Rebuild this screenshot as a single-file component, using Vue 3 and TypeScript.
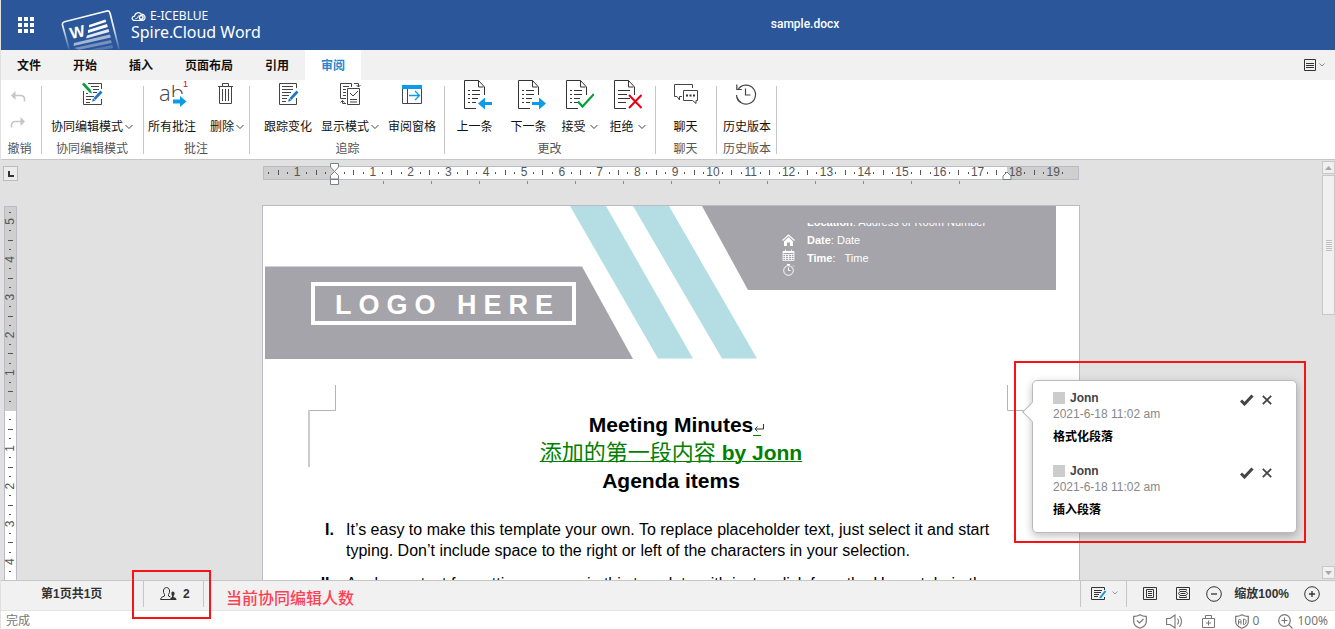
<script setup lang="ts">
interface Tool {
  id: string
  label: string
  menu?: boolean
}
interface Group {
  id: string
  title: string
  tools: Tool[]
}
interface Comment {
  author: string
  date: string
  text: string
}

const tabs: string[] = ['文件', '开始', '插入', '页面布局', '引用', '审阅']
const activeTab = '审阅'

const groups: Group[] = [
  { id: 'coedit', title: '协同编辑模式', tools: [{ id: 'mode', label: '协同编辑模式', menu: true }] },
  {
    id: 'notes',
    title: '批注',
    tools: [
      { id: 'allnotes', label: '所有批注' },
      { id: 'trash', label: '删除', menu: true },
    ],
  },
  {
    id: 'track',
    title: '追踪',
    tools: [
      { id: 'trackchanges', label: '跟踪变化' },
      { id: 'display', label: '显示模式', menu: true },
      { id: 'pane', label: '审阅窗格' },
    ],
  },
  {
    id: 'changes',
    title: '更改',
    tools: [
      { id: 'prev', label: '上一条' },
      { id: 'next', label: '下一条' },
      { id: 'accept', label: '接受', menu: true },
      { id: 'reject', label: '拒绝', menu: true },
    ],
  },
  { id: 'chat', title: '聊天', tools: [{ id: 'chat', label: '聊天' }] },
  { id: 'history', title: '历史版本', tools: [{ id: 'history', label: '历史版本' }] },
]

const comments: Comment[] = [
  { author: 'Jonn', date: '2021-6-18 11:02 am', text: '格式化段落' },
  { author: 'Jonn', date: '2021-6-18 11:02 am', text: '插入段落' },
]

const cm = 37.8
const hZero = 72
const vZero = 204.5

interface Mark {
  pos: number
  kind: 'number' | 'half' | 'dot'
  label: string
}
function marks(zero: number, fromQuarter: number, toQuarter: number): Mark[] {
  const out: Mark[] = []
  for (let q = fromQuarter; q <= toQuarter; q++) {
    if (q === 0) continue
    const pos = zero + (q * cm) / 4
    const rest = Math.abs(q) % 4
    out.push({ pos, kind: rest === 0 ? 'number' : rest === 2 ? 'half' : 'dot', label: String(Math.abs(q) / 4) })
  }
  return out
}
const hMarks = marks(hZero, -7, 77)
const vMarks = marks(vZero, -21, 17)
const tabStops: number[] = Array.from({ length: 13 }, (_, i) => hZero + 48 * (i + 1))
const thumbGrip = [0, 1, 2, 3, 4, 5]
</script>

<template>
  <div class="app">
    <header class="top">
      <button class="launcher" aria-label="应用">
        <svg width="16" height="16" viewBox="0 0 16 16" fill="#fff">
          <template v-for="r in 3" :key="r">
            <rect v-for="c in 3" :key="c" :x="(c - 1) * 6" :y="(r - 1) * 6" width="4" height="4" />
          </template>
        </svg>
      </button>
      <svg class="logo" width="60" height="40" viewBox="0 0 60 40">
        <defs>
          <linearGradient id="fade" x1="0" y1="0" x2="0" y2="1">
            <stop offset="0" stop-color="#fff" />
            <stop offset=".45" stop-color="#dfe6f1" />
            <stop offset="1" stop-color="#3f68a6" />
          </linearGradient>
        </defs>
        <path d="M8 39 L1.5 15 Q1 12.500 3.500 11.800 L46 1 Q48.500 .6 49 3 L58 39" fill="none" stroke="url(#fade)" stroke-width="1.700" />
        <path d="M28 15 L44.500 9.500 L45.200 12 L28 17.500Z M27 20 L46 14 L46.800 17 L27 23Z" fill="#fff" />
        <path d="M26 25.500 L47.500 19 L48.300 22 L25 28.500Z" fill="#e3e9f3" />
        <path d="M13 33 L49 24.500 L49.800 27.500 L12.500 36Z" fill="#a5b7d5" />
        <path d="M13 38 L50 30 L50.800 33 L18 39.800Z" fill="#7892c0" />
        <path d="M28 39.800 L51.500 35 L52 38 L42 39.800Z" fill="#5577ae" />
        <text x="10" y="29" transform="rotate(-12 10 29)" class="logo-w">W</text>
      </svg>
      <div class="brand">
        <div class="vendor">
          <svg width="15" height="11" viewBox="0 0 15 11" fill="none" stroke="#fff">
            <path d="M4 9.500 C.5 9.500 0 6 3.500 5.200 C4 1.500 8.500 .5 10 3.200 C14 2.500 15.500 8 12 9.500Z" stroke-width="1.200" />
            <path d="M4 8 Q7 8 7.500 4.500" stroke-width=".8" />
            <circle cx="10.200" cy="6.400" r="1.800" stroke-width="1.500" />
          </svg>
          <span>E-ICEBLUE</span>
        </div>
        <div class="product">Spire.Cloud Word</div>
      </div>
      <div class="doc-name">sample.docx</div>
    </header>

    <nav class="tabs">
      <button v-for="t in tabs" :key="t" class="tab" :class="{ active: t === activeTab }">{{ t }}</button>
      <button class="view-toggle" aria-label="功能区显示">
        <svg width="22" height="12" viewBox="0 0 22 12" fill="none" stroke="#333">
          <path d="M.5 .5h11v11h-11z M2 4.500h8 M2 6.500h8 M2 8.500h8" />
          <path d="M15.500 4.500l2.500 2.500 2.500-2.500" stroke="#888" />
        </svg>
      </button>
    </nav>

    <div class="ribbon">
      <section class="group undo">
        <div class="undo-tools">
          <button aria-label="撤销">
            <svg width="16" height="12" viewBox="0 0 16 12" fill="none" stroke="#c6c6c6" stroke-width="1.600">
              <path d="M2 4.500h8.500q4 0 4 4v2" />
              <path d="M5.500 0v9L1 4.500z" fill="#c6c6c6" stroke="none" />
            </svg>
          </button>
          <button aria-label="重做">
            <svg width="16" height="12" viewBox="0 0 16 12" fill="none" stroke="#c6c6c6" stroke-width="1.600">
              <path d="M14 4.500H5.500q-4 0-4 4v2" />
              <path d="M10.500 0v9l4.500-4.500z" fill="#c6c6c6" stroke="none" />
            </svg>
          </button>
        </div>
        <h2>撤销</h2>
      </section>

      <section v-for="g in groups" :key="g.id" class="group" :class="g.id">
        <div class="tools">
          <button v-for="t in g.tools" :key="t.id" class="tool">
            <svg v-if="t.id === 'mode'" width="28" height="32" viewBox="0 0 28 32" fill="none" stroke="#444">
              <path d="M10 3.500h13.500V9 M23.500 19v5.500h-18V11 M13 6.500h8 M15 9.500h6 M8 13.500h2 M15 12.500h4 M8 16.500h8 M8 19.500h5 M8 22.500h4" />
              <path d="M5 3.500l7 7.500" stroke="#00a13a" stroke-width="2.600" />
              <path d="M10.500 12l3.500 1.500-1.200-3.500z" fill="#00a13a" stroke="none" />
              <path d="M23.500 11.500l-7 7.500" stroke="#1e76cc" stroke-width="2.600" />
              <path d="M14 21.800l1-3.500 2.500 2.200z" fill="#1e76cc" stroke="none" />
            </svg>
            <svg v-else-if="t.id === 'allnotes'" class="ab-icon" width="30" height="32" viewBox="0 0 30 32">
              <text x="2" y="21" class="ab">ab</text>
              <text x="26" y="7" class="sup">1</text>
              <path d="M15 17h6v-3h9v15h-15z" fill="#fff" />
              <path d="M16 19.500h7v-3.500l6.500 5.500-6.500 5.500v-3.500h-7z" fill="#0b9be8" />
            </svg>
            <svg v-else-if="t.id === 'trash'" width="28" height="32" viewBox="0 0 28 32" fill="none" stroke="#444">
              <path d="M5 6.500h15 M9.500 6v-2.500h6V6 M6.500 7v16.500h12V7 M9.500 9v12 M12.500 9v12 M15.500 9v12" />
            </svg>
            <svg v-else-if="t.id === 'trackchanges'" width="28" height="32" viewBox="0 0 28 32" fill="none" stroke="#444">
              <path d="M22.500 8V3.500h-17v21h17V18 M8 6.500h11 M8 9.500h11 M8 12.500h9 M8 15.500h7 M8 18.500h5 M8 21.500h4" />
              <path d="M23.500 11.500l-7 7.500" stroke="#1e76cc" stroke-width="2.600" />
              <path d="M14 21.800l1-3.500 2.500 2.200z" fill="#1e76cc" stroke="none" />
            </svg>
            <svg v-else-if="t.id === 'display'" width="28" height="32" viewBox="0 0 28 32" fill="none" stroke="#444">
              <path d="M10 18.500H4.500V3.500h11V7 M7 6.500h6 M7 9.500h3 M7 12.500h3 M7 15.500h3 M11.500 8.500h12v16h-12z M14 13l3 3 5-5 M14 19.500h7 M14 22h7" />
              <path d="M18 3.500h4.500V7 M20.500 5l2 2 2-2 M10 23.500H6.500V21 M4.500 22.500l2-2 2 2" />
            </svg>
            <svg v-else-if="t.id === 'pane'" width="28" height="32" viewBox="0 0 28 32" fill="none" stroke="#444">
              <path d="M4.500 7v16.500h19V7 M9.500 9v14" />
              <path d="M4 5h20v4H4z" fill="#0b9be8" stroke="none" />
              <path d="M11 15.500h10 M17 11l4.500 4.500L17 20" stroke="#0b9be8" stroke-width="1.300" />
            </svg>
            <svg
              v-else-if="g.id === 'changes'"
              :width="t.menu ? 28 : 34"
              height="32"
              :viewBox="t.menu ? '0 0 28 32' : '-6 0 34 32'"
              fill="none"
              stroke="#333"
            >
              <path d="M.5 .5h14l6 6.500v8 M12 28.500H.5V.5 M14.500 .5v6.500h5" />
              <path v-if="t.id !== 'reject'" d="M4 10.500h2 M8 10.500h8 M4 14.500h2 M8 14.500h8 M4 18.500h2 M8 18.500h6 M4 22.500h2 M8 22.500h4" />
              <path v-else d="M4 10.500h12 M4 14.500h9 M4 18.500h12 M4 22.500h8" />
              <path v-if="t.id === 'prev'" d="M28 22H21v-4.500L14 23.500l7 6V25h7z" fill="#0b9be8" stroke="none" />
              <path v-if="t.id === 'next'" d="M14 22h7v-4.500l7 6-7 6V25h-7z" fill="#0b9be8" stroke="none" />
              <path v-if="t.id === 'accept'" d="M12 21.500l4.500 5L28 14" stroke="#00a13a" stroke-width="2.200" />
              <path v-if="t.id === 'reject'" d="M15 15l12.500 13 M27.500 15L15 28" stroke="#e60012" stroke-width="2" />
            </svg>
            <svg v-else-if="t.id === 'chat'" width="28" height="32" viewBox="0 0 28 32" fill="none" stroke="#444">
              <path d="M20.500 8V4.500h-18v12h2.500l2.500 3.500v-3.500h2.500" />
              <path d="M11.500 10.500h14v10h-1.500v3l-3.500-3h-9z" />
              <path d="M14 14.500h2v2h-2z M17.500 14.500h2v2h-2z M21 14.500h2v2h-2z" fill="#333" stroke="none" />
            </svg>
            <svg v-else width="28" height="32" viewBox="0 0 28 32" fill="none" stroke="#444" stroke-width="1.200">
              <path d="M5 9.500A9.500 9.500 0 1 1 3.500 15" />
              <path d="M3.800 4.500v5h5 M12.500 8.500v6.500h5" />
              <path d="M4 17.500A9.500 9.500 0 0 0 8 22.500" />
            </svg>
            <span class="caption">
              {{ t.label }}
              <svg v-if="t.menu" width="8" height="6" viewBox="0 0 8 6" fill="none" stroke="#444"><path d="M.5 1L4 4.500 7.500 1" /></svg>
            </span>
          </button>
        </div>
        <h2>{{ g.title }}</h2>
      </section>
    </div>

    <main class="workspace">
      <button class="tab-kind" aria-label="制表符">
        <svg width="6" height="6" viewBox="0 0 6 6"><path d="M0 0h2v4h4v2H0z" fill="#333" /></svg>
      </button>
      <div class="ruler-row">
        <svg class="h-ruler" width="816" height="22" viewBox="0 0 816 22">
          <rect x=".5" y="3.500" width="815" height="13" fill="#cfcfcf" stroke="#b9bcc4" />
          <rect x="72" y="4" width="672" height="12" fill="#fff" />
          <g v-for="m in hMarks" :key="m.pos">
            <text v-if="m.kind === 'number'" :x="m.pos" y="13" class="num">{{ m.label }}</text>
            <rect v-else-if="m.kind === 'half'" :x="Math.floor(m.pos)" y="7" width="1" height="5" fill="#555" />
            <rect v-else :x="Math.floor(m.pos)" y="9" width="1" height="2" fill="#555" />
          </g>
          <rect v-for="s in tabStops" :key="s" :x="s" y="18" width="1" height="3" fill="#8a8d94" />
          <g fill="#fff" stroke="#7b8089">
            <path d="M67.500 .5h8V4l-4 4.500-4-4.500z" />
            <path d="M67.500 16v-3.500l4-4 4 4V16z" />
            <path d="M67.500 16.500h8v5h-8z" />
            <path d="M740 16.500v-3.500l4-4 4 4v3.500z" />
          </g>
        </svg>
      </div>
      <div class="v-col">
        <svg class="v-ruler" width="13" height="374" viewBox="0 0 13 374">
          <rect x=".5" y=".5" width="12" height="376" fill="#fff" stroke="#b9bcc4" />
          <rect x="1" y="1" width="11" height="204" fill="#cfcfcf" />
          <g v-for="m in vMarks" :key="m.pos">
            <text v-if="m.kind === 'number'" :transform="`translate(10 ${m.pos}) rotate(-90)`" class="num">{{ m.label }}</text>
            <rect v-else-if="m.kind === 'half'" x="4" :y="Math.floor(m.pos)" width="5" height="1" fill="#555" />
            <rect v-else x="5" :y="Math.floor(m.pos)" width="2" height="1" fill="#555" />
          </g>
        </svg>
      </div>

      <div class="stage">
        <article class="page">
          <div class="banner">
            <svg width="816" height="153" viewBox="0 0 816 153">
              <path d="M2 60.500H319L370 153H2z" fill="#a5a4aa" />
              <path d="M439 0H793V84H485z" fill="#a5a4aa" />
              <path d="M307 0H343L430 152.500H395z M370 0H406L494 152.500H459z" fill="#b4dee3" />
            </svg>
            <div class="logo-box">LOGO HERE</div>
            <div class="meta">
              <svg width="13" height="42" viewBox="0 0 13 42" fill="none" stroke="#fff">
                <path d="M.5 6.500l6-5.500 6 5.500" stroke-width="1.200" />
                <path d="M2 7.500L6.500 3 11 7.500V12H8V8.500H5V12H2z" fill="#fff" stroke="none" />
                <path d="M1 17.500h11v9H1z M1 20.500h11 M1 22.500h11 M1 24.500h11 M3.500 20v6 M6.500 20v6 M9.500 20v6 M3.500 15.500v3 M9.500 15.500v3" stroke-width=".8" />
                <path d="M1 17h11v2H1z" fill="#fff" stroke="none" />
                <circle cx="6.500" cy="36.500" r="4.800" />
                <path d="M5 30.500h3 M6.500 30.500v1.500 M6.500 33.500v3h2 M11 31.500l1 1" />
              </svg>
              <div class="meta-clip">
                <div class="meta-lines">
                  <div><b>Location</b>: Address or Room Number</div>
                  <div><b>Date</b>: Date</div>
                  <div><b>Time</b>: &nbsp; Time</div>
                </div>
              </div>
            </div>
          </div>
          <svg class="margins" width="816" height="84" viewBox="0 0 816 84" fill="none" stroke="#b4b4b4">
            <path d="M72.500 0V25.500H46 M744.500 0V25.500H765" />
            <path d="M46 25V82" stroke="#ccc" stroke-width="2" />
          </svg>
          <div class="heading">
            <h1>
              <span class="with-mark">Meeting Minutes<svg class="mark" width="12" height="14" viewBox="0 0 12 14" fill="none" stroke="#333"><path d="M10.500 2v5H2 M4.500 4.500L2 7 4.500 9.500" /><path d="M0 13.500h8" stroke="#008000" /></svg></span>
            </h1>
            <p><ins><span class="cjk">添加的第一段内容</span> by Jonn</ins></p>
            <h1>Agenda items</h1>
          </div>
          <ol class="items">
            <li>
              <b>I.</b>
              <span>It’s easy to make this template your own. To replace placeholder text, just select it and start typing. Don’t include space to the right or left of the characters in your selection.</span>
            </li>
            <li>
              <b>II.</b>
              <span>Apply any text formatting you see in this template with just a click from the Home tab, in the Styles group.</span>
            </li>
          </ol>

          <div class="frame comment-frame"></div>
          <aside class="callout">
            <div v-for="c in comments" :key="c.text" class="comment">
              <div class="who">
                <i class="swatch"></i>
                <strong>{{ c.author }}</strong>
                <button aria-label="接受修订">
                  <svg width="14" height="12" viewBox="0 0 14 12"><path d="M1 6.500l3.500 3.500L12.500 1.500" fill="none" stroke="#444" stroke-width="3" /></svg>
                </button>
                <button aria-label="拒绝修订">
                  <svg width="10" height="10" viewBox="0 0 10 10"><path d="M.8 .8l8.400 8.400M9.200 .8L.8 9.200" stroke="#444" stroke-width="1.800" /></svg>
                </button>
              </div>
              <time>{{ c.date }}</time>
              <p>{{ c.text }}</p>
            </div>
          </aside>
        </article>
      </div>

      <div class="scrollbar">
        <button aria-label="向上滚动"><svg width="7" height="4" viewBox="0 0 7 4"><path d="M0 4L3.500 0 7 4z" fill="#a8a8a8" /></svg></button>
        <div class="thumb"><i v-for="n in thumbGrip" :key="n"></i></div>
        <button class="down" aria-label="向下滚动"><svg width="7" height="4" viewBox="0 0 7 4"><path d="M0 0h7L3.500 4z" fill="#a8a8a8" /></svg></button>
      </div>
    </main>

    <footer class="status">
      <div class="pages">第1页共1页</div>
      <div class="people">
        <svg width="17" height="14" viewBox="0 0 17 14" fill="none" stroke="#333">
          <path d="M.5 12.500q0-2.500 4-3.500v-1.500q-1.500-2-1-4.500.7-2.500 3-2.500t3 2.500q.5 2.500-1 4.500V9l2 1 M.5 12.500h10.500" />
          <path d="M12.500 4.500q2.500 0 2 3l-1 1.500v1q3 .7 3 3H10q0-2 2-3V9q-1.500-4 .5-4.500z" fill="#333" stroke="none" />
        </svg>
        <span>2</span>
        <div class="frame people-frame"></div>
        <div class="note">当前协同编辑人数</div>
      </div>
      <div class="right">
        <button class="proof" aria-label="修订">
          <svg width="27" height="14" viewBox="0 0 27 14" fill="none" stroke="#333">
            <path d="M13.500 3V.5H.5v12h13V10 M3 3.500h8 M3 5.500h7 M3 7.500h5 M3 9.500h4" />
            <path d="M14.500 4L9 11" stroke="#1494e0" stroke-width="2" />
            <path d="M21.500 4.500l2.500 2.500 2.500-2.500" stroke="#999" />
          </svg>
        </button>
        <div class="zoom">
          <button aria-label="页面视图">
            <svg width="14" height="14" viewBox="0 0 14 14" fill="none" stroke="#333"><path d="M.5 .5h13v12H.5z M3.500 2.500h7v8h-7z M5 4.500h4 M5 6.500h4 M5 8.500h4" /></svg>
          </button>
          <button class="web" aria-label="Web 视图">
            <svg width="14" height="14" viewBox="0 0 14 14" fill="none" stroke="#333"><path d="M.5 .5h13v12H.5z M3.500 3.500V2.500h7v1 M3.500 9.500v1h7v-1 M4 4.500h6l1.500 2-1.500 2H4l-1.500-2z M4.500 6.500h5" /></svg>
          </button>
          <button aria-label="缩小">
            <svg width="16" height="16" viewBox="0 0 16 16" fill="none" stroke="#333"><circle cx="8" cy="8" r="7.300" /><path d="M5 8h6" stroke-width="1.300" /></svg>
          </button>
          <span>缩放100%</span>
          <button aria-label="放大">
            <svg width="16" height="16" viewBox="0 0 16 16" fill="none" stroke="#333"><circle cx="8" cy="8" r="7.300" /><path d="M5 8h6M8 5v6" stroke-width="1.300" /></svg>
          </button>
        </div>
      </div>
    </footer>

    <div class="browser-bar">
      <span>完成</span>
      <div class="tray">
        <svg width="14" height="15" viewBox="0 0 14 15" fill="none" stroke="#777"><path d="M7 .7Q10 2.500 13.300 2.300V8Q13 12 7 14.300 1 12 .7 8V2.300Q4 2.500 7 .7z M4 6.500l2.500 2.500 4-4" stroke-width="1.200" /></svg>
        <svg width="17" height="15" viewBox="0 0 17 15" fill="none" stroke="#777" stroke-width="1.100"><path d="M.6 4.500h3.500L9 1v13L4.100 10.500H.6z M11.500 4.500q2 3 0 6 M13.500 2q4 5.500 0 11" /></svg>
        <svg width="14" height="15" viewBox="0 0 14 15" fill="none" stroke="#777"><path d="M.5 4.500h12v9H.5z M3.500 4V1.500h6V4 M6.500 6.500v5 M4 9h5" /></svg>
        <span class="pair">
          <svg width="14" height="15" viewBox="0 0 14 15" fill="none" stroke="#777"><path d="M7 .7Q10 2.500 13.300 2.300V8Q13 12 7 14.300 1 12 .7 8V2.300Q4 2.500 7 .7z" stroke-width="1.200" /><path d="M3.500 10.500v-4l1-1.500 1.500 1.500v4 M3.500 8h2.500 M8.500 5v5.500h1l1.500-1.500V6.500L9.500 5z" /></svg>
          0
        </span>
        <span class="pair">
          <svg width="15" height="15" viewBox="0 0 15 15" fill="none" stroke="#777" stroke-width="1.200"><circle cx="6.500" cy="6.500" r="5.800" /><path d="M10.700 10.700l3.800 3.800 M3.500 6.500h6 M6.500 3.500v6" /></svg>
          100%
        </span>
      </div>
    </div>
  </div>
</template>

<style>
body {
  margin: 0;
}
</style>

<style scoped>
.app {
  box-sizing: border-box;
  display: flex;
  flex-direction: column;
  height: 100vh;
  overflow: hidden;
  border-left: 1px solid #e1e1e1;
  background: #fff;
  color: #222;
  font: 12px/16px 'Liberation Sans', 'Noto Sans CJK SC', sans-serif;
}
button {
  margin: 0;
  padding: 0;
  border: 0;
  background: none;
  color: inherit;
  font: inherit;
}
svg {
  display: block;
  flex: none;
}
h1,
h2,
p {
  margin: 0;
}

.top {
  position: relative;
  display: flex;
  flex: none;
  height: 50px;
  background: #2b579a;
  color: #fff;
}
.launcher {
  width: 50px;
  padding-left: 17px;
}
.logo {
  margin: 10px 0 0 10px;
}
.logo-w {
  fill: #fff;
  font: bold 16px 'Liberation Sans', sans-serif;
}
.brand {
  margin: 9px 0 0 10px;
  font-family: 'Noto Sans', 'Open Sans', sans-serif;
}
.vendor {
  display: flex;
  align-items: center;
  gap: 4px;
  font-size: 12px;
  line-height: 14px;
}
.product {
  font-size: 16px;
  line-height: 18px;
}
.doc-name {
  position: absolute;
  top: 16px;
  left: 0;
  right: 0;
  padding-left: 274px;
  font: 500 12px/16px Roboto, sans-serif;
  text-align: center;
}

.tabs {
  display: flex;
  flex: none;
  height: 30px;
  background: #f1f1f1;
  color: #111;
}
.tab {
  padding: 2px 16px 0;
  font-weight: bold;
}
.tab.active {
  background: #fff;
  color: #2b86cd;
}
.view-toggle {
  margin-left: auto;
  padding-right: 9px;
}

.ribbon {
  display: flex;
  flex: none;
  height: 79px;
  border-bottom: 1px solid #c6c6c6;
}
.group {
  position: relative;
  box-sizing: border-box;
  display: flex;
  flex-direction: column;
  align-items: center;
  color: #111;
}
.group::after {
  content: '';
  position: absolute;
  top: 6px;
  right: 0;
  width: 1px;
  height: 68px;
  background: #c6c6c6;
}
.group h2 {
  margin-top: 6px;
  color: #555;
  font-size: 12px;
  font-weight: normal;
}
.undo {
  width: 41px;
  padding-right: 4px;
}
.undo-tools {
  display: flex;
  flex-direction: column;
  gap: 14px;
  height: 44px;
  padding: 11px 4px 0 0;
}
.tools {
  display: flex;
}
.tool {
  display: flex;
  flex-direction: column;
  align-items: center;
  white-space: nowrap;
}
.tool > svg {
  margin-bottom: 7px;
}
.ab-icon {
  overflow: visible;
}
.ab {
  fill: #444;
  font: 300 22px 'Open Sans', 'Noto Sans', sans-serif;
}
.sup {
  fill: #e60012;
  font: 9px 'Liberation Sans', sans-serif;
}
.caption {
  display: flex;
  align-items: center;
  gap: 2px;
}
.coedit {
  width: 102px;
  padding-right: 2px;
}
.notes {
  width: 106px;
  padding-right: 2px;
}
.notes .tools {
  gap: 14px;
}
.track {
  width: 195px;
}
.track .tools {
  gap: 9px;
  padding-left: 5px;
}
.changes {
  width: 211px;
  padding-right: 2px;
}
.changes .tool {
  width: 54px;
}
.changes .tool:nth-child(n + 3) {
  width: 48px;
}
.changes .caption {
  gap: 4px;
}
.chat {
  width: 61px;
  padding-right: 2px;
}
.history {
  width: 60px;
}

.workspace {
  display: grid;
  grid-template: 46px minmax(0, 1fr) / 19px minmax(0, 1fr) 13px;
  flex: 1;
  min-height: 0;
  overflow: hidden;
  background: #e1e1e1;
}
.tab-kind {
  display: grid;
  place-items: center;
  width: 15px;
  height: 15px;
  margin: 6px 0 0 2px;
  border: 1px solid #bbb;
  background: #ececec;
}
.ruler-row {
  display: flex;
  justify-content: center;
  padding-top: 3px;
}
.num {
  fill: #555;
  font: 12px 'Liberation Sans', sans-serif;
  text-anchor: middle;
}
.v-col {
  grid-row: 2;
  padding-left: 3px;
  overflow: hidden;
}
.stage {
  display: flex;
  justify-content: center;
  grid-area: 2 / 2;
  min-height: 0;
  margin-top: -1px;
}
.page {
  position: relative;
  flex: none;
  width: 816px;
  border: 1px solid #b9bcc4;
  border-bottom: 0;
  background: #fff;
}
.banner {
  position: relative;
}
.logo-box {
  position: absolute;
  top: 76px;
  left: 48px;
  box-sizing: border-box;
  width: 265px;
  padding: 3px 0 0 20px;
  border: 4px solid #fff;
  color: #fff;
  font-size: 27px;
  font-weight: bold;
  line-height: 32px;
  letter-spacing: 7px;
}
.meta {
  position: absolute;
  top: 17px;
  left: 519px;
  display: flex;
  gap: 12px;
  color: #fff;
  font-size: 11px;
  line-height: 18px;
}
.meta svg {
  margin-top: 11px;
}
.meta-clip {
  overflow: hidden;
}
.meta-lines {
  margin-top: -10px;
}
.margins {
  position: absolute;
  top: 179px;
  left: 0;
}
.heading {
  padding-top: 52px;
  color: #000;
  font-size: 21px;
  font-weight: bold;
  line-height: 28px;
  text-align: center;
}
.heading h1 {
  font-size: 21px;
}
.with-mark {
  position: relative;
}
.mark {
  position: absolute;
  top: 9px;
  left: 100%;
}
.heading ins {
  color: #008000;
  text-decoration-thickness: 1px;
}
.cjk {
  font-family: 'Noto Sans CJK SC', sans-serif;
  font-size: 22px;
  font-weight: 400;
  line-height: 20px;
}
.items {
  display: flex;
  flex-direction: column;
  gap: 12px;
  margin: 24px 72px 0 0;
  padding: 0;
  color: #000;
  font-size: 16px;
  line-height: 21px;
  list-style: none;
}
.items li {
  display: grid;
  grid-template-columns: 71px 1fr;
  gap: 12px;
}
.items b {
  text-align: right;
}

.frame {
  position: absolute;
  border: 2px solid #f81414;
}
.comment-frame {
  top: 155px;
  left: 751px;
  width: 288px;
  height: 178px;
}
.callout {
  position: absolute;
  top: 174px;
  left: 769px;
  box-sizing: border-box;
  width: 265px;
  padding: 9px 24px 14px 20px;
  border: 1px solid #bbb;
  border-radius: 5px;
  background: #fff;
  box-shadow: 0 3px 8px rgba(0, 0, 0, 0.25);
}
.callout::before {
  content: '';
  position: absolute;
  top: 24px;
  left: -8px;
  width: 13px;
  height: 13px;
  border: solid #bbb;
  border-width: 0 0 1px 1px;
  background: #fff;
  transform: rotate(45deg);
}
.comment + .comment {
  margin-top: 18px;
}
.who {
  display: flex;
  align-items: center;
}
.who strong {
  flex: 1;
  margin-left: 5px;
  color: #444;
}
.who button {
  margin-left: 8px;
  padding-top: 4px;
}
.swatch {
  width: 12px;
  height: 12px;
  background: #ccc;
}
.comment time {
  display: block;
  color: #888;
}
.comment p {
  margin-top: 7px;
  color: #000;
  font-weight: bold;
}

.scrollbar {
  display: flex;
  flex-direction: column;
  grid-area: 1 / 3 / 3 / 4;
  gap: 1px;
  padding: 1px 0 1px;
}
.scrollbar button {
  display: grid;
  place-items: center;
  box-sizing: border-box;
  height: 13px;
  border: 1px solid #c8c8c8;
  background: #f0f0f0;
}
.scrollbar .down {
  margin-top: auto;
}
.thumb {
  box-sizing: border-box;
  display: flex;
  flex-direction: column;
  align-items: center;
  justify-content: center;
  gap: 1px;
  height: 140px;
  border: 1px solid #c8c8c8;
  background: #f0f0f0;
}
.thumb i {
  width: 6px;
  height: 1px;
  background: #c0c0c0;
}

.status {
  position: relative;
  display: flex;
  flex: none;
  height: 26px;
  padding-bottom: 3px;
  border-top: 1px solid #c6c6c6;
  border-bottom: 1px solid #e4e4e4;
  background: #f1f1f1;
  color: #333;
  font-weight: bold;
}
.status > div {
  display: flex;
  align-items: center;
}
.pages {
  width: 102px;
  padding-left: 40px;
}
.people {
  position: relative;
  gap: 6px;
  box-sizing: border-box;
  width: 61px;
  padding-left: 16px;
  border: solid #c6c6c6;
  border-width: 0 1px;
}
.people-frame {
  inset: -11px -8px -12px -12px;
}
.note {
  position: absolute;
  top: 6px;
  left: 82px;
  color: #ff3f55;
  font-size: 16px;
  font-weight: 500;
  line-height: 24px;
  white-space: nowrap;
}
.right {
  margin-left: auto;
}
.proof {
  height: 26px;
  padding: 0 8px 0 10px;
  border: solid #c6c6c6;
  border-width: 0 1px;
}
.zoom {
  display: flex;
  align-items: center;
  gap: 16px;
  padding: 0 15px 0 16px;
}
.zoom span {
  margin: 0 -1px 0 -4px;
}
.zoom .web {
  margin-left: 3px;
}

.browser-bar {
  display: flex;
  align-items: center;
  justify-content: space-between;
  box-sizing: border-box;
  flex: none;
  height: 18px;
  padding: 2px 7px 0 5px;
  background: #fff;
  color: #777;
  line-height: 16px;
}
.tray {
  display: flex;
  align-items: center;
  gap: 19px;
  font-family: 'Noto Sans', sans-serif;
}
.pair {
  display: flex;
  align-items: center;
  gap: 4px;
}
</style>
